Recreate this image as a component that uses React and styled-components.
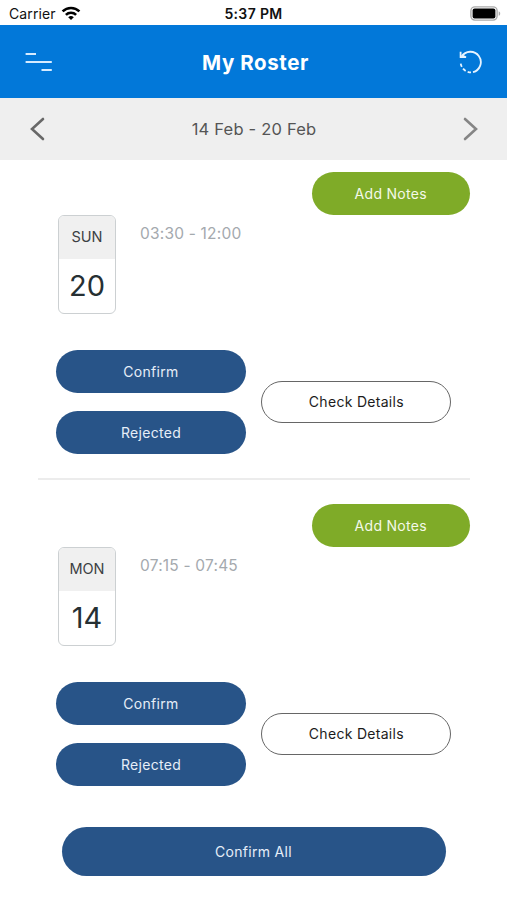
import styled, { createGlobalStyle } from "styled-components";

const GlobalStyle = createGlobalStyle`
  * {
    box-sizing: border-box;
  }

  body {
    margin: 0;
    background-color: #fff;
    font-family: Inter, "Liberation Sans", sans-serif;
  }

  button {
    padding: 0;
    border: none;
    background: none;
    font-family: inherit;
  }

  svg {
    display: block;
  }
`;

const Screen = styled.div`
  width: 507px;
  height: 900px;
  overflow: hidden;
  background-color: #fff;
`;

const StatusBar = styled.div`
  height: 25px;
  padding: 1px 6px 0 9px;
  display: grid;
  grid-template-columns: 1fr auto 1fr;
  align-items: center;
  color: #111;
  font-size: 14px;
`;

const Carrier = styled.div`
  display: flex;
  align-items: center;
  gap: 5px;
  letter-spacing: 0.1px;
`;

const Clock = styled.div`
  padding-right: 3px;
  font-weight: 600;
  letter-spacing: 0.35px;
`;

const Battery = styled.div`
  justify-self: end;
`;

const Header = styled.header`
  height: 73px;
  padding: 1px 24px 0 24px;
  display: flex;
  align-items: center;
  justify-content: space-between;
  background-color: #0278d9;
`;

const Title = styled.h1`
  margin: 0;
  color: #fff;
  font-size: 20.5px;
  font-weight: 700;
  letter-spacing: 0.6px;
`;

const WeekBar = styled.div`
  height: 62px;
  padding: 0 28px 0 29px;
  display: flex;
  align-items: center;
  justify-content: space-between;
  background-color: #efefef;
`;

const WeekRange = styled.div`
  color: #555;
  font-size: 16.5px;
  letter-spacing: 0.2px;
`;

const IconButton = styled.button`
  color: ${(props) => props.$color};
`;

const ShiftItem = styled.section`
  height: 320px;
  margin: 0 37px 12px 38px;
  padding-top: 12px;
  border-bottom: ${(props) => (props.$last ? "none" : "2px solid #ececec")};
`;

const Pill = styled.button`
  width: ${(props) => props.$width}px;
  height: ${(props) => props.$height || 42.5}px;
  border-radius: 25px;
  background-color: ${(props) => props.$bg};
  color: ${(props) => props.$color || "#e6eef8"};
  border: ${(props) => (props.$outlined ? "1px solid #666" : "none")};
  font-size: 14px;
  letter-spacing: 0.3px;
`;

const NotesRow = styled.div`
  display: flex;
  justify-content: flex-end;
`;

const ShiftInfo = styled.div`
  display: flex;
  align-items: flex-start;
  gap: 24px;
  padding-left: 20px;
`;

const DateBox = styled.div`
  width: 58px;
  height: 99.5px;
  border: 1px solid #ccd0d2;
  border-radius: 6px;
  overflow: hidden;
  text-align: center;
`;

const DayName = styled.div`
  height: 43px;
  line-height: 42px;
  background-color: #f0f0f0;
  color: #3c4043;
  font-size: 14.5px;
`;

const DayNumber = styled.div`
  line-height: 54px;
  color: #263033;
  font-size: 29px;
`;

const ShiftTime = styled.div`
  padding-top: 9px;
  color: #a4a9ae;
  font-size: 15.5px;
  line-height: 20px;
  letter-spacing: 0.2px;
`;

const Actions = styled.div`
  display: flex;
  align-items: center;
  gap: 15.4px;
  padding: 36px 0 0 18px;
`;

const ActionColumn = styled.div`
  display: flex;
  flex-direction: column;
  gap: 18.5px;
`;

const Footer = styled.footer`
  display: flex;
  justify-content: center;
  padding-top: 3px;
`;

const WifiIcon = () => (
  <svg width="20" height="15" viewBox="0 0 20 15" fill="none" stroke="#000" strokeWidth="2.6">
    <path d="M1.6 5.4a12 12 0 0 1 16.8 0" />
    <path d="M4.9 8.9a7.3 7.3 0 0 1 10.2 0" />
    <path d="M10 14 7.2 11.2a4.1 4.1 0 0 1 5.6 0Z" fill="#000" stroke="none" />
  </svg>
);

const BatteryIcon = () => (
  <svg width="31" height="15" viewBox="0 0 31 15">
    <rect x="0.9" y="0.9" width="26.2" height="13.2" rx="4" fill="#fff" stroke="#aaa" strokeWidth="1.4" />
    <rect x="2.6" y="2.6" width="22.8" height="9.8" rx="2" fill="#000" />
    <path d="M28.7 5.2c2 .8 2 3.8 0 4.6Z" fill="#aaa" />
  </svg>
);

const MenuIcon = () => (
  <svg width="28" height="20" viewBox="0 0 28 20" stroke="#d6ebff" strokeWidth="1.9">
    <path d="M1.6 2h10.4M1.6 10h26.2M17.5 18h10.3" />
  </svg>
);

const RefreshIcon = () => (
  <svg width="24" height="24" viewBox="0 0 24 24" fill="none" stroke="#e6f3ff" strokeWidth="1.8">
    <path d="M2.6 6.6A10.4 10.4 0 1 1 14 22.2" />
    <path d="M12 22.4A10.4 10.4 0 0 1 1.6 12" strokeDasharray="3.4 2.2" />
    <path d="M1.6 1.8V7.2H7L3 5.4" />
  </svg>
);

const ChevronIcon = ({ points }) => (
  <svg width="16" height="24" viewBox="0 0 16 24" fill="none" stroke="currentColor" strokeWidth="2.6">
    <polyline points={points} strokeLinecap="round" />
  </svg>
);

const shifts = [
  { day: "SUN", date: "20", time: "03:30 - 12:00" },
  { day: "MON", date: "14", time: "07:15 - 07:45" },
];

const Shift = ({ day, date, time, last }) => (
  <ShiftItem $last={last}>
    <NotesRow>
      <Pill type="button" $width={158.5} $bg="#7fab28" $color="#f4f9e8">
        Add Notes
      </Pill>
    </NotesRow>
    <ShiftInfo>
      <DateBox>
        <DayName>{day}</DayName>
        <DayNumber>{date}</DayNumber>
      </DateBox>
      <ShiftTime>{time}</ShiftTime>
    </ShiftInfo>
    <Actions>
      <ActionColumn>
        <Pill type="button" $width={190} $bg="#285488">
          Confirm
        </Pill>
        <Pill type="button" $width={190} $bg="#285488">
          Rejected
        </Pill>
      </ActionColumn>
      <Pill type="button" $width={190} $bg="#fff" $color="#1c1c1c" $outlined>
        Check Details
      </Pill>
    </Actions>
  </ShiftItem>
);

const App = () => {
  return (
    <Screen>
      <GlobalStyle />
      <StatusBar>
        <Carrier>
          Carrier
          <WifiIcon />
        </Carrier>
        <Clock>5:37 PM</Clock>
        <Battery>
          <BatteryIcon />
        </Battery>
      </StatusBar>
      <Header>
        <IconButton type="button" aria-label="Menu">
          <MenuIcon />
        </IconButton>
        <Title>My Roster</Title>
        <IconButton type="button" aria-label="Refresh">
          <RefreshIcon />
        </IconButton>
      </Header>
      <WeekBar>
        <IconButton type="button" aria-label="Previous week" $color="#686868">
          <ChevronIcon points="14,2 3,12 14,22" />
        </IconButton>
        <WeekRange>14 Feb - 20 Feb</WeekRange>
        <IconButton type="button" aria-label="Next week" $color="#858585">
          <ChevronIcon points="2,2 13,12 2,22" />
        </IconButton>
      </WeekBar>
      {shifts.map((shift, index) => (
        <Shift key={shift.day} {...shift} last={index === shifts.length - 1} />
      ))}
      <Footer>
        <Pill type="button" $width={384} $height={49} $bg="#285488">
          Confirm All
        </Pill>
      </Footer>
    </Screen>
  );
};

export default App;
